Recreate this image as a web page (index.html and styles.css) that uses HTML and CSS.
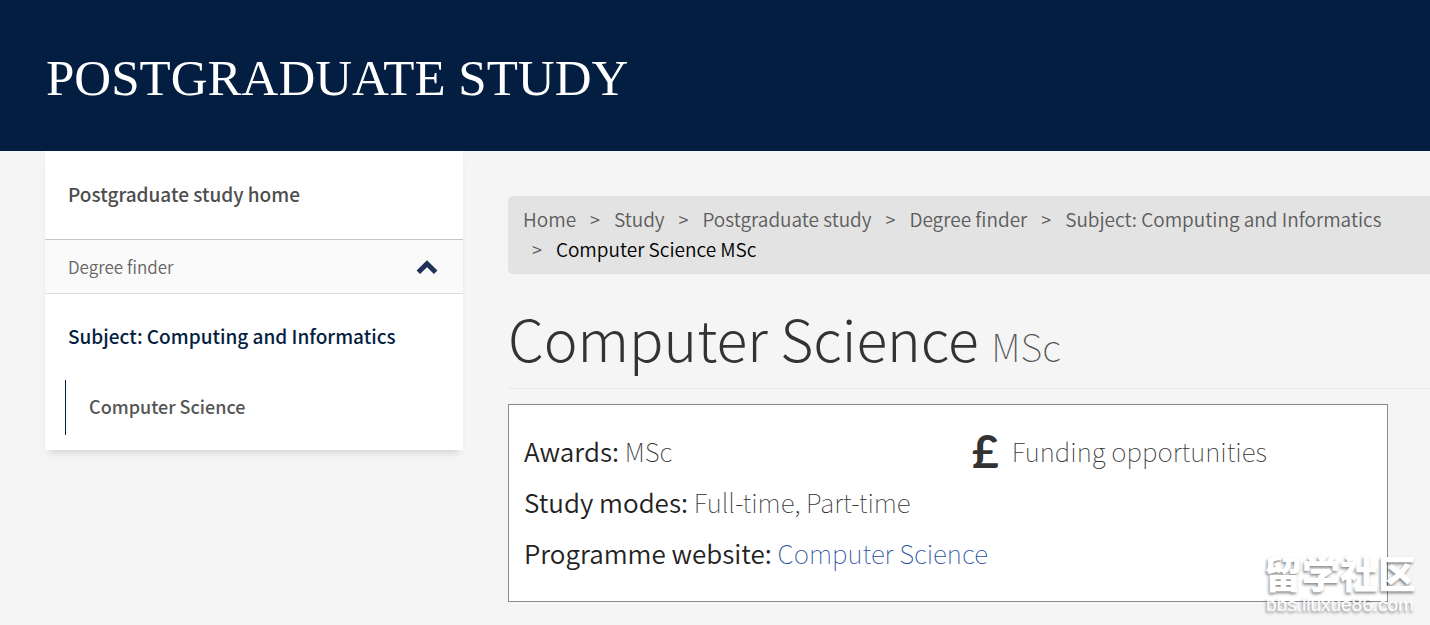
FILE: index.html
```html
<!DOCTYPE html>
<html lang="en">
<head>
  <meta charset="UTF-8" />
  <meta name="viewport" content="width=device-width, initial-scale=1.0"/>
  <title>Computer Science MSc | Postgraduate study</title>
  <link rel="stylesheet" href="styles.css">
</head>
<body>
  <header class="site-header">
    <div class="site-title">POSTGRADUATE STUDY</div>
  </header>

  <div class="page">
    <nav class="sidebar" aria-label="Section">
      <a class="side-home" href="#">Postgraduate study home</a>
      <a class="side-parent" href="#">
        Degree finder
        <svg class="chevron" viewBox="0 0 22 15" aria-hidden="true">
          <path d="M2.3 12.2 L11 3.7 L19.7 12.2" fill="none" stroke="#1f3358" stroke-width="5"/>
        </svg>
      </a>
      <a class="side-subject" href="#">Subject: Computing and Informatics</a>
      <a class="side-current" href="#">Computer Science</a>
    </nav>

    <main class="content">
      <ol class="breadcrumb">
        <li><a href="#">Home</a></li>
        <li><a href="#">Study</a></li>
        <li><a href="#">Postgraduate study</a></li>
        <li><a href="#">Degree finder</a></li>
        <li><a href="#">Subject: Computing and Informatics</a></li>
        <li class="active">Computer Science MSc</li>
      </ol>

      <h1 class="page-heading">Computer Science <small>MSc</small></h1>

      <div class="details">
        <div class="details-main">
          <p><strong>Awards:</strong> MSc</p>
          <p><strong>Study modes:</strong> Full-time, Part-time</p>
          <p><strong>Programme website:</strong> <a href="#">Computer Science</a></p>
        </div>
        <div class="details-side">
          <a class="funding" href="#"><span class="pound">£</span>Funding opportunities</a>
        </div>
      </div>
    </main>
  </div>

  <div class="watermark">
    <div class="watermark-name" lang="zh">留学社区</div>
    <div class="watermark-url">bbs.liuxue86.com</div>
  </div>
</body>
</html>
```
FILE: styles.css
```css
* {
  box-sizing: border-box;
}

body {
  margin: 0;
  min-height: 100vh;
  position: relative;
  font-family: "Noto Sans CJK SC", "Open Sans", sans-serif;
  background: #f5f5f5;
  color: #333;
}

a {
  color: inherit;
  text-decoration: none;
}

.site-header {
  background: #041e42;
  padding: 48px 46px 43px;
}

.site-title {
  font-family: "Liberation Serif", serif;
  font-size: 51px;
  line-height: 60px;
  color: #fff;
}

.page {
  display: grid;
  grid-template-columns: 418px 1fr;
  gap: 45px;
  padding-left: 45px;
  align-items: start;
}

/* sidebar */
.sidebar {
  display: flex;
  flex-direction: column;
  background: #fff;
  padding-bottom: 15px;
  box-shadow: 0 6px 8px -4px rgba(0,0,0,0.16);
}

.side-home {
  padding: 28px 23px 30px;
  font-size: 19px;
  line-height: 30px;
  font-weight: 500;
  color: #4d4d4d;
  border-bottom: 1px solid #c4c4c4;
}

.side-parent {
  display: flex;
  align-items: center;
  justify-content: space-between;
  padding: 12px 25px 11px 23px;
  font-size: 17px;
  line-height: 30px;
  font-weight: 350;
  color: #666;
  background: #fafafa;
  border-bottom: 1px solid #dcdcdc;
}

.chevron {
  width: 22px;
  height: 15px;
}

.side-subject {
  padding: 27px 23px 29px;
  font-size: 19px;
  line-height: 30px;
  font-weight: 500;
  color: #041e42;
}

.side-current {
  margin-left: 20px;
  padding: 11px 23px 14px;
  font-size: 18px;
  line-height: 30px;
  font-weight: 500;
  color: #555;
  border-left: 1px solid #041e42;
}

/* main column */
.content {
  padding-top: 45px;
}

.breadcrumb {
  list-style: none;
  display: flex;
  flex-wrap: wrap;
  margin: 0;
  padding: 8px 15px 10px;
  background: #e3e3e3;
  border-radius: 5px 0 0 5px;
  font-size: 19px;
  line-height: 30px;
  font-weight: 350;
  color: #5c5c5c;
}

.breadcrumb li {
  margin-right: 5px;
}

.breadcrumb li + li::before {
  content: ">";
  padding: 0 14px 0 9px;
  font-size: 18px;
  line-height: 1;
}

.breadcrumb .active {
  color: #000;
}

.breadcrumb .active::before {
  color: #5c5c5c;
}

.page-heading {
  margin: 26px 0 15px;
  padding-bottom: 13px;
  border-bottom: 1px solid #eaeaea;
  font-size: 57px;
  line-height: 75px;
  font-weight: 300;
}

.page-heading small {
  font-size: 38px;
  line-height: 1;
  font-weight: 100;
  color: #555;
}

.details {
  display: grid;
  grid-template-columns: minmax(0, 1fr) minmax(0, 1fr);
  gap: 48px;
  margin-right: 42px;
  padding: 20px 15px 23px;
  background: #fff;
  border: 1px solid #8c8c8c;
  font-size: 26px;
  line-height: 51px;
  font-weight: 100;
}

.details p {
  margin: 0;
  white-space: nowrap;
}

.details strong {
  font-size: 26px;
  line-height: 1;
  font-weight: 350;
  color: #222;
}

.details p a {
  color: #1f4b9e;
}

.funding {
  display: flex;
  align-items: center;
  gap: 13px;
}

.pound {
  font-family: Lato, sans-serif;
  font-size: 46px;
  font-weight: 700;
}

/* forum stamp in the bottom corner */
.watermark {
  position: absolute;
  right: 14px;
  bottom: 10px;
  color: #fff;
  text-align: center;
  text-shadow: -1px 2px 3px rgba(0,0,0,0.45);
}

.watermark-name {
  margin-bottom: 2px;
  font-size: 38px;
  line-height: 42px;
  font-weight: 900;
}

.watermark-url {
  font-family: "Liberation Sans", sans-serif;
  font-size: 19px;
  line-height: 20px;
}
```
